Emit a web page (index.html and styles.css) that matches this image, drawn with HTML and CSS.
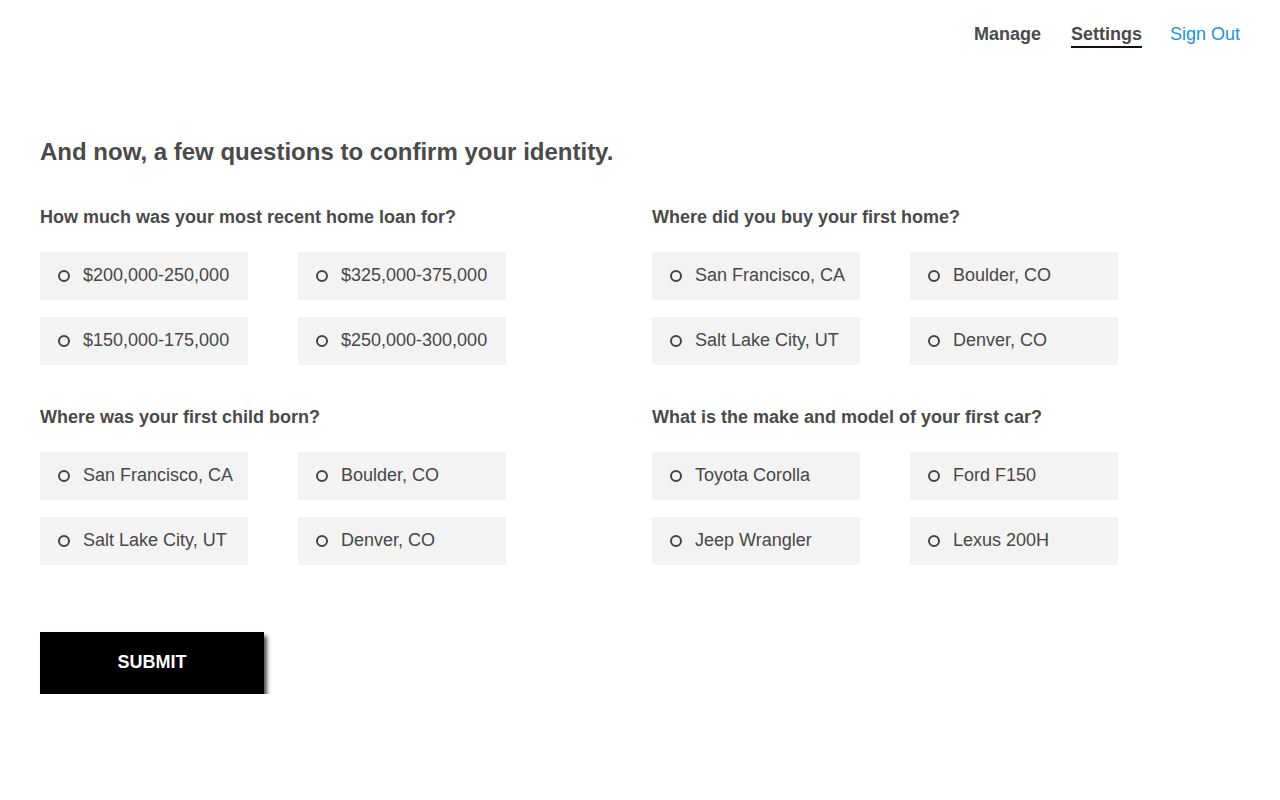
FILE: index.html
```html
<!DOCTYPE html>
<html lang="en">
<head>
<meta charset="utf-8">
<title>Confirm your identity</title>
<link rel="stylesheet" href="styles.css">
</head>
<body>
<header class="topnav">
  <a class="nav-link" href="#">Manage</a>
  <a class="nav-link active" href="#">Settings</a>
  <a class="nav-link signout" href="#">Sign Out</a>
</header>
<main class="page">
  <h1 class="title">And now, a few questions to confirm your identity.</h1>
  <div class="questions">
    <section class="group">
      <h2 class="question">How much was your most recent home loan for?</h2>
      <div class="options">
        <label class="option"><span class="radio"></span>$200,000-250,000</label>
        <label class="option"><span class="radio"></span>$325,000-375,000</label>
        <label class="option"><span class="radio"></span>$150,000-175,000</label>
        <label class="option"><span class="radio"></span>$250,000-300,000</label>
      </div>
    </section>
    <section class="group">
      <h2 class="question">Where did you buy your first home?</h2>
      <div class="options">
        <label class="option"><span class="radio"></span>San Francisco, CA</label>
        <label class="option"><span class="radio"></span>Boulder, CO</label>
        <label class="option"><span class="radio"></span>Salt Lake City, UT</label>
        <label class="option"><span class="radio"></span>Denver, CO</label>
      </div>
    </section>
    <section class="group">
      <h2 class="question">Where was your first child born?</h2>
      <div class="options">
        <label class="option"><span class="radio"></span>San Francisco, CA</label>
        <label class="option"><span class="radio"></span>Boulder, CO</label>
        <label class="option"><span class="radio"></span>Salt Lake City, UT</label>
        <label class="option"><span class="radio"></span>Denver, CO</label>
      </div>
    </section>
    <section class="group">
      <h2 class="question">What is the make and model of your first car?</h2>
      <div class="options">
        <label class="option"><span class="radio"></span>Toyota Corolla</label>
        <label class="option"><span class="radio"></span>Ford F150</label>
        <label class="option"><span class="radio"></span>Jeep Wrangler</label>
        <label class="option"><span class="radio"></span>Lexus 200H</label>
      </div>
    </section>
  </div>
  <button class="submit" type="button">SUBMIT</button>
</main>
</body>
</html>
```

FILE: styles.css
```css
* { box-sizing: border-box; }
html, body {
  margin: 0;
  padding: 0;
  background: #ffffff;
  font-family: "Liberation Sans", Arial, sans-serif;
  color: #4a4a4a;
}
.topnav {
  display: flex;
  justify-content: flex-end;
  align-items: flex-start;
  gap: 30px;
  padding: 23px 40px 0 0;
  height: 70px;
}
.nav-link {
  font-size: 18px;
  line-height: 22px;
  font-weight: bold;
  color: #4a4a4a;
  text-decoration: none;
  padding-bottom: 1px;
  border-bottom: 2px solid transparent;
}
.nav-link.active {
  color: #4a4a4a;
  border-bottom-color: #111111;
}
.nav-link.signout {
  font-weight: normal;
  color: #1a94de;
  margin-left: -2px;
}
.page {
  padding: 68px 40px 0 40px;
}
.title {
  margin: 0;
  font-size: 24px;
  line-height: 28px;
  font-weight: bold;
  color: #4a4a4a;
}
.questions {
  display: grid;
  grid-template-columns: 612px 612px;
  row-gap: 42px;
  margin-top: 41px;
}
.question {
  margin: 0 0 25px 0;
  font-size: 18px;
  line-height: 20px;
  font-weight: bold;
  color: #4a4a4a;
}
.options {
  display: grid;
  grid-template-columns: 208px 208px;
  column-gap: 50px;
  row-gap: 17px;
}
.option {
  display: flex;
  align-items: center;
  height: 48px;
  padding-left: 18px;
  padding-bottom: 2px;
  background: #f3f3f3;
  font-size: 18px;
  color: #474747;
  cursor: pointer;
}
.radio {
  width: 12px;
  height: 12px;
  border: 2px solid #444444;
  border-radius: 50%;
  margin-right: 13px;
  margin-top: 2px;
  flex: none;
}
.submit {
  display: block;
  margin-top: 67px;
  width: 224px;
  height: 62px;
  padding-bottom: 2px;
  background: #000000;
  color: #ffffff;
  border: none;
  font-family: "Liberation Sans", Arial, sans-serif;
  font-size: 18px;
  font-weight: bold;
  box-shadow: 3px 4px 4px rgba(0, 0, 0, 0.7);
  cursor: pointer;
}
```
